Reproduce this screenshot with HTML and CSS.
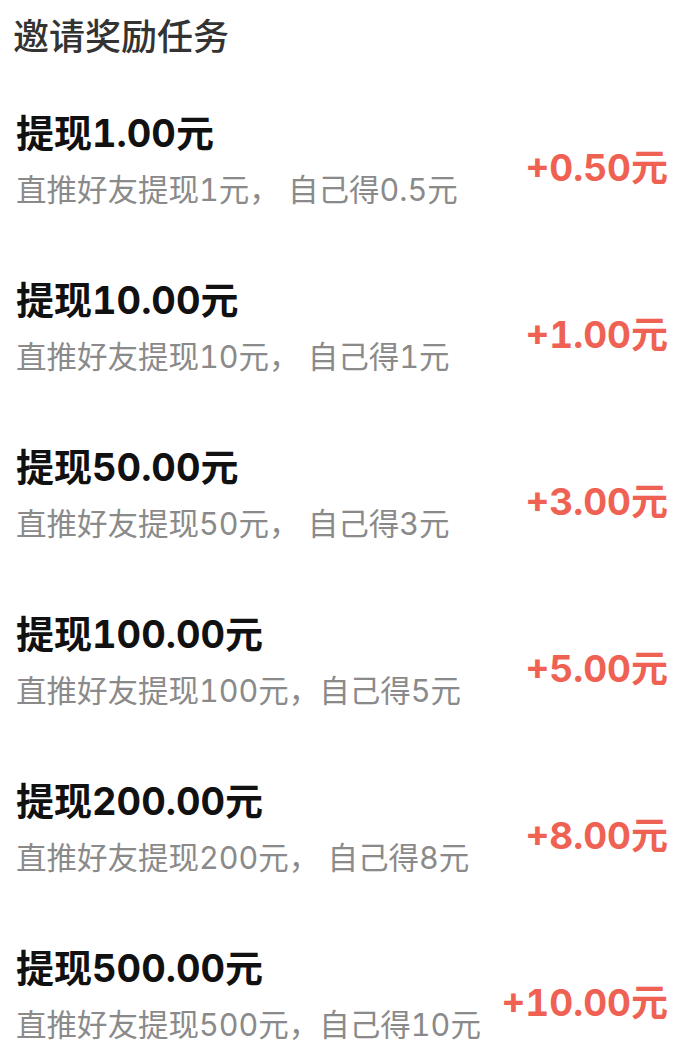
FILE: index.html
```html
<!DOCTYPE html>
<html lang="zh-CN">
<head>
    <meta charset="UTF-8">
    <meta name="viewport" content="width=device-width, initial-scale=1.0">
    <title>邀请奖励任务</title>
    <link rel="stylesheet" href="styles.css">
</head>
<body>
    <div class="task-page">
        <h1 class="task-title">邀请奖励任务</h1>

        <ul class="task-list">
            <li class="task-item">
                <div class="task-info">
                    <div class="task-name">提现1.00元</div>
                    <div class="task-desc">直推好友提现1元， 自己得0.5元</div>
                </div>
                <div class="task-reward">+0.50元</div>
            </li>
            <li class="task-item">
                <div class="task-info">
                    <div class="task-name">提现10.00元</div>
                    <div class="task-desc">直推好友提现10元， 自己得1元</div>
                </div>
                <div class="task-reward">+1.00元</div>
            </li>
            <li class="task-item">
                <div class="task-info">
                    <div class="task-name">提现50.00元</div>
                    <div class="task-desc">直推好友提现50元， 自己得3元</div>
                </div>
                <div class="task-reward">+3.00元</div>
            </li>
            <li class="task-item">
                <div class="task-info">
                    <div class="task-name">提现100.00元</div>
                    <div class="task-desc">直推好友提现100元，自己得5元</div>
                </div>
                <div class="task-reward">+5.00元</div>
            </li>
            <li class="task-item">
                <div class="task-info">
                    <div class="task-name">提现200.00元</div>
                    <div class="task-desc">直推好友提现200元， 自己得8元</div>
                </div>
                <div class="task-reward">+8.00元</div>
            </li>
            <li class="task-item">
                <div class="task-info">
                    <div class="task-name">提现500.00元</div>
                    <div class="task-desc">直推好友提现500元，自己得10元</div>
                </div>
                <div class="task-reward">+10.00元</div>
            </li>
        </ul>
    </div>
</body>
</html>
```

FILE: styles.css
```css
* {
    box-sizing: border-box;
    margin: 0;
    padding: 0;
}

body {
    font-family: "Inter", "Noto Sans CJK SC", sans-serif;
    font-variant-numeric: tabular-nums;
    background: #fff;
    color: #111;
}

.task-page {
    padding: 10px 22px 0 13px;
}

.task-title {
    font-family: "Noto Sans CJK SC", sans-serif;
    font-size: 36px;
    line-height: 48px;
    font-weight: 500;
    color: #333;
    margin-bottom: 18px;
}

.task-list {
    list-style: none;
}

.task-item {
    display: flex;
    justify-content: space-between;
    align-items: center;
    height: 167px;
    padding-left: 3px;
}

.task-name {
    font-size: 38px;
    line-height: 48px;
    font-weight: bold;
    color: #111;
}

.task-desc {
    margin-top: 13px;
    font-size: 30.5px;
    line-height: 40px;
    color: #8a8a8a;
    white-space: pre;
}

.task-reward {
    padding-top: 10px;
    font-size: 37px;
    font-weight: bold;
    color: #ef6253;
    white-space: nowrap;
}
```
